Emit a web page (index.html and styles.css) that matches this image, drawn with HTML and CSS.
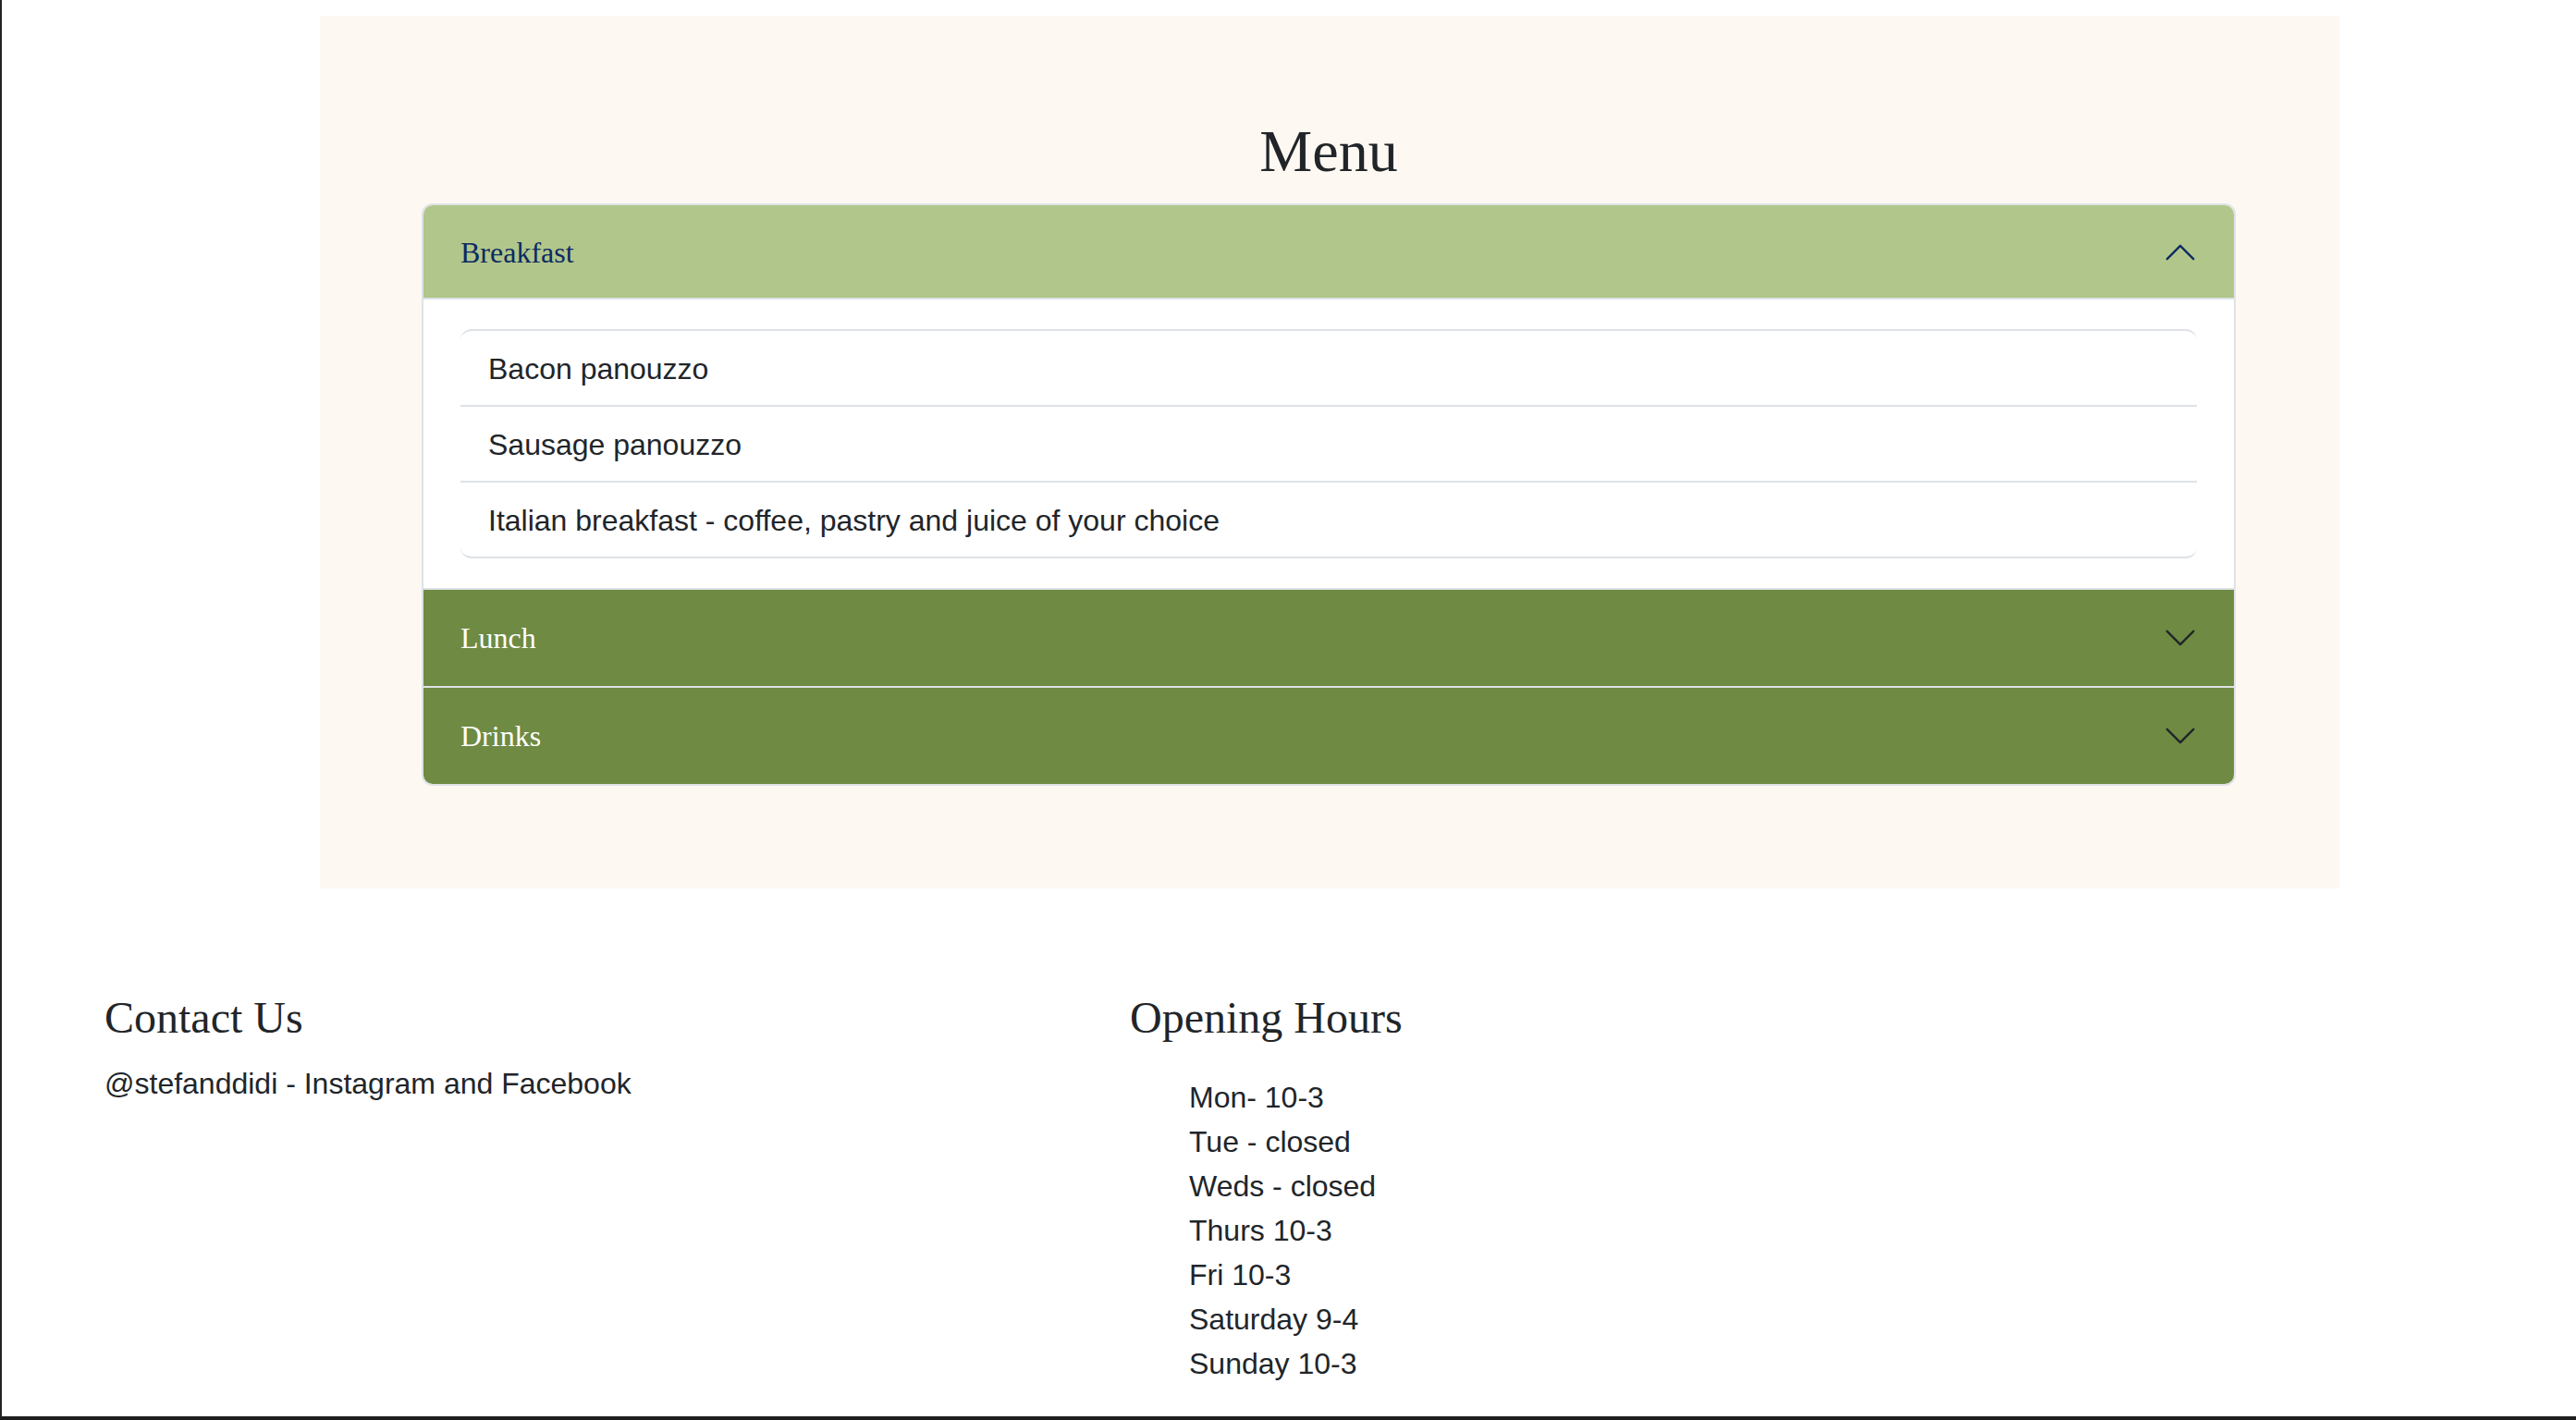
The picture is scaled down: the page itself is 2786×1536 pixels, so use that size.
FILE: index.html
```html
<!DOCTYPE html>
<html lang="en">
<head>
    <meta charset="UTF-8">
    <meta name="viewport" content="width=device-width, initial-scale=1.0">
    <title>Stef and Didi</title>
    <link rel="stylesheet" href="styles.css">
</head>
<body>
    <div class="page">
        <section class="menu">
            <h2 class="menu-title">Menu</h2>
            <div class="accordion">
                <div class="accordion-item">
                    <h3 class="accordion-header">
                        <button class="accordion-button open" type="button">
                            Breakfast
                            <svg class="chevron" viewBox="0 0 16 16" fill="none" stroke-linecap="round" stroke-linejoin="round"><path d="M2 5L8 11L14 5"/></svg>
                        </button>
                    </h3>
                    <div class="accordion-body">
                        <ul class="list-group">
                            <li>Bacon panouzzo</li>
                            <li>Sausage panouzzo</li>
                            <li>Italian breakfast - coffee, pastry and juice of your choice</li>
                        </ul>
                    </div>
                </div>
                <div class="accordion-item">
                    <h3 class="accordion-header">
                        <button class="accordion-button" type="button">
                            Lunch
                            <svg class="chevron" viewBox="0 0 16 16" fill="none" stroke-linecap="round" stroke-linejoin="round"><path d="M2 5L8 11L14 5"/></svg>
                        </button>
                    </h3>
                </div>
                <div class="accordion-item">
                    <h3 class="accordion-header">
                        <button class="accordion-button" type="button">
                            Drinks
                            <svg class="chevron" viewBox="0 0 16 16" fill="none" stroke-linecap="round" stroke-linejoin="round"><path d="M2 5L8 11L14 5"/></svg>
                        </button>
                    </h3>
                </div>
            </div>
        </section>

        <footer class="footer">
            <div class="footer-col">
                <h4>Contact Us</h4>
                <p class="contact">@stefanddidi - Instagram and Facebook</p>
            </div>
            <div class="footer-col">
                <h4>Opening Hours</h4>
                <ul class="hours">
                    <li>Mon- 10-3</li>
                    <li>Tue - closed</li>
                    <li>Weds - closed</li>
                    <li>Thurs 10-3</li>
                    <li>Fri 10-3</li>
                    <li>Saturday 9-4</li>
                    <li>Sunday 10-3</li>
                </ul>
            </div>
        </footer>
    </div>
</body>
</html>
```

FILE: styles.css
```css
* {
    margin: 0;
    padding: 0;
    box-sizing: border-box;
}

body {
    font-family: "Liberation Sans", Arial, sans-serif;
    font-size: 32px;
    line-height: 48px;
    color: #212529;
    background-color: #fff;
}

h2, h3, h4 {
    font-family: "Liberation Serif", "Times New Roman", serif;
    font-weight: 400;
}

.page {
    min-height: 100vh;
    border-left: 2px solid #232323;
    border-bottom: 4px solid #1e1e1e;
    padding-top: 17px;
}

/* menu block */
.menu {
    width: 2184px;
    margin-left: 344px;
    background: #fdf8f1;
    padding: 108px 112px 111px 110px;
}

.menu-title {
    font-size: 64px;
    line-height: 77px;
    text-align: center;
    margin-bottom: 18px;
}

.accordion {
    border: 2px solid #dee2e6;
    border-radius: 12px;
    overflow: hidden;
    background: #fff;
}

.accordion-item + .accordion-item {
    border-top: 2px solid #dee2e6;
}

.accordion-header {
    font-size: 32px;
}

.accordion-button {
    display: flex;
    align-items: center;
    justify-content: space-between;
    width: 100%;
    padding: 32px 38px 32px 40px;
    border: none;
    background: #6e8a43;
    color: #fff;
    font-family: "Liberation Serif", "Times New Roman", serif;
    font-size: 32px;
    line-height: 40px;
    text-align: left;
    cursor: pointer;
}

.accordion-button.open {
    background: #b1c68a;
    color: #0d2a62;
    box-shadow: inset 0 -2px 0 #dee2e6;
    line-height: 38px;
}

.chevron {
    width: 40px;
    height: 38px;
    stroke: #212529;
    stroke-width: 1px;
}

.open .chevron {
    transform: rotate(180deg);
    stroke: #0d2a62;
}

.accordion-body {
    padding: 32px 40px;
}

.list-group {
    list-style: none;
    border-style: solid;
    border-color: #dee2e6;
    border-width: 2px 0;
    border-radius: 12px;
}

.list-group li {
    padding: 17px 30px 15px;
}

.list-group li + li {
    border-top: 2px solid #dee2e6;
}

/* footer */
.footer {
    display: grid;
    grid-template-columns: 1109px 1109px;
    padding: 111px 0 0 111px;
}

.footer h4 {
    font-size: 48px;
    line-height: 58px;
    margin-bottom: 16px;
}

.contact {
    padding-top: 2px;
}

.hours {
    list-style: none;
    padding-left: 64px;
    margin-top: 33px;
}
```
